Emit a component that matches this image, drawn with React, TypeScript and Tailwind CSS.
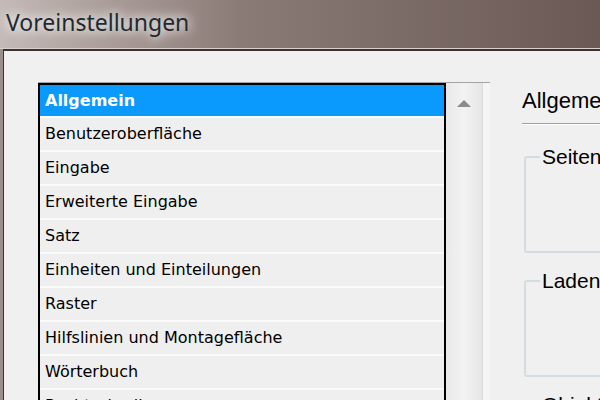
import React from "react";

const items = [
  "Allgemein",
  "Benutzeroberfläche",
  "Eingabe",
  "Erweiterte Eingabe",
  "Satz",
  "Einheiten und Einteilungen",
  "Raster",
  "Hilfslinien und Montagefläche",
  "Wörterbuch",
  "Rechtschreibung",
  "Autokorrektur",
];

const groups = ["Seitennummerierung", "Laden von Schriften", "Objektbearbeitung"];

export default function App() {
  return (
    <div className="w-[600px] h-[400px] overflow-hidden flex flex-col bg-[#6a5954]">
      {/* title bar */}
      <div className="h-[48px] shrink-0 flex items-center pl-[6px] pb-[4px] bg-gradient-to-r from-[#c4bab7] via-[#8b7b76] via-40% to-[#6a5954]">
        <span
          className="text-[23px] leading-none text-[#1d2a33] [text-shadow:0_0_10px_#ffffff,0_0_16px_#ffffff]"
          style={{ fontFamily: '"Noto Sans", "Open Sans", sans-serif' }}
        >
          Voreinstellungen
        </span>
      </div>

      {/* dialog body */}
      <div className="flex-1 flex border-t border-[#d7cfcc] bg-[#9a8d8a] pl-[3px]">
        <div className="flex-1 flex border-t-2 border-l border-[#3e3330] bg-[#f0f0f0] pt-[31px] pl-[34px] gap-[32px]">
          {/* list box */}
          <div className="w-[452px] shrink-0 flex border-t border-[#a3a3a3] bg-[#f4f4f4]">
            <div
              className="w-[408px] shrink-0 border-l-2 border-t-2 border-r-2 border-black bg-[#fafafa] flex flex-col gap-[2px]"
              style={{ fontFamily: '"DejaVu Sans", Tahoma, sans-serif' }}
            >
              {items.map((it, i) => (
                <div
                  key={it}
                  className={
                    i === 0
                      ? "h-[31px] shrink-0 flex items-center pl-[5px] bg-[#0a99fc] text-white font-bold text-[16px]"
                      : "h-[32px] shrink-0 flex items-center pl-[5px] bg-[#efefef] text-black text-[16px]"
                  }
                >
                  {it}
                </div>
              ))}
            </div>
            {/* scrollbar */}
            <div className="w-[36px] shrink-0 flex bg-[#e8e8e8]">
              <div className="flex-1 flex justify-center pt-[17px] bg-gradient-to-r from-[#e9e9e9] via-[#f3f3f3] to-[#e6e6e6]">
                <svg width="14" height="7" viewBox="0 0 14 7">
                  <polygon points="7,0 14,7 0,7" fill="#8c8c8c" />
                </svg>
              </div>
            </div>
            <div className="w-[8px] shrink-0 border-l border-[#dcdcdc] bg-[#f5f5f5]" />
          </div>

          {/* right panel */}
          <div
            className="flex-1 flex flex-col min-w-0 overflow-hidden"
            style={{ fontFamily: '"Liberation Sans", Arial, sans-serif' }}
          >
            <div className="text-[22px] leading-none text-black whitespace-nowrap pt-[8px]">Allgemein</div>
            <div className="mt-[11px] h-[2px] border-t border-[#a0a0a0] border-b border-b-white" />
            <div className="flex flex-col gap-[17px] mt-[21px] ml-[2px]">
              {groups.map((g) => (
                <fieldset
                  key={g}
                  className="h-[107px] shrink-0 border-2 border-[#d3dce1] rounded-[3px] pl-[14px] -mr-[10px]"
                >
                  <legend className="px-[2px] text-[21px] leading-none text-black whitespace-nowrap">{g}</legend>
                </fieldset>
              ))}
            </div>
          </div>
        </div>
      </div>
    </div>
  );
}
